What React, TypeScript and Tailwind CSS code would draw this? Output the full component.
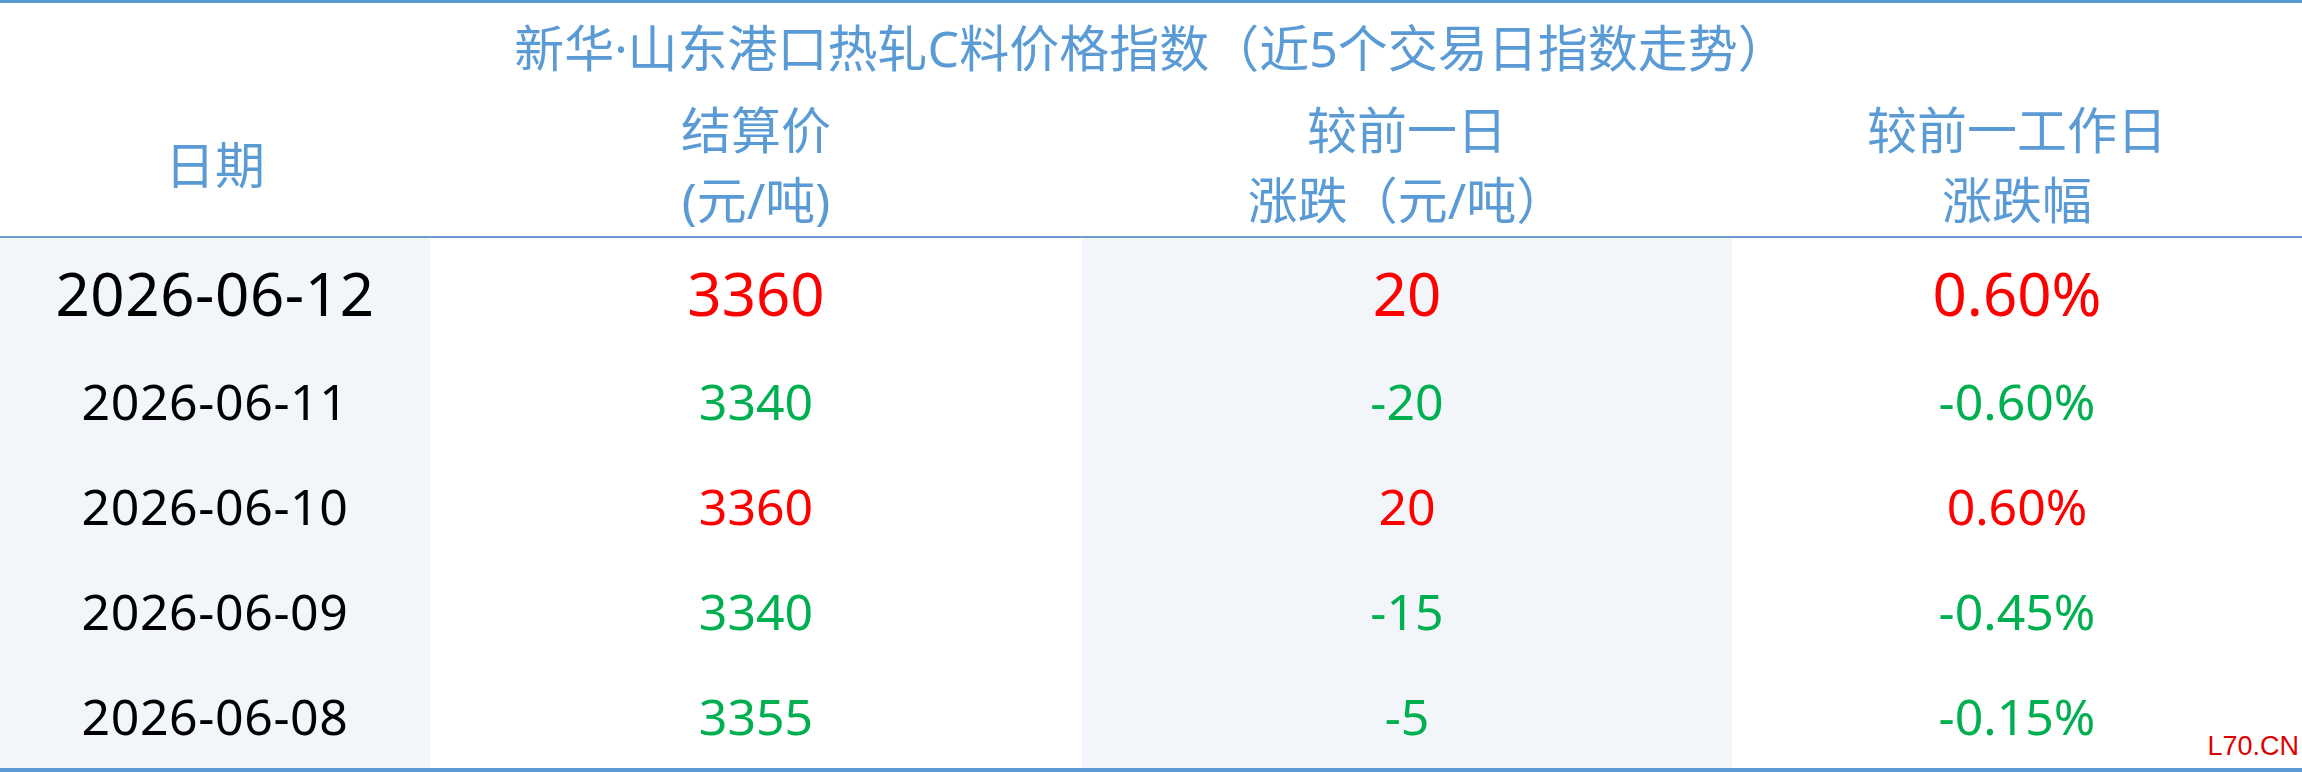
import React from "react";

type Row = {
	date: string;
	price: string;
	diff: string;
	pct: string;
	up: boolean;
};

const rows: Row[] = [
	{ date: "2026-06-12", price: "3360", diff: "20", pct: "0.60%", up: true },
	{ date: "2026-06-11", price: "3340", diff: "-20", pct: "-0.60%", up: false },
	{ date: "2026-06-10", price: "3360", diff: "20", pct: "0.60%", up: true },
	{ date: "2026-06-09", price: "3340", diff: "-15", pct: "-0.45%", up: false },
	{ date: "2026-06-08", price: "3355", diff: "-5", pct: "-0.15%", up: false },
];

export default function App() {
	return (
		<div className="relative h-[772px] w-[2302px] border-t-[3px] border-b-4 border-[#5b9bd5] bg-white font-['Noto_Sans','Noto_Sans_CJK_SC',sans-serif]">
			{/* Title */}
			<div className="flex h-[90px] items-center justify-center text-[50px] leading-none text-[#5b9bd5]">
				新华·山东港口热轧C料价格指数（近5个交易日指数走势）
			</div>

			{/* Column headers */}
			<div className="grid h-[145px] grid-cols-[430px_652px_650px_570px] border-b-2 border-[#6b9bd1] text-[50px] leading-[70px] text-[#5b9bd5]">
				<div className="flex items-center justify-center">日期</div>
				<div className="flex flex-col items-center justify-center">
					<span>结算价</span>
					<span>(元/吨)</span>
				</div>
				<div className="flex flex-col items-center justify-center">
					<span>较前一日</span>
					<span>涨跌（元/吨）</span>
				</div>
				<div className="flex flex-col items-center justify-center">
					<span>较前一工作日</span>
					<span>涨跌幅</span>
				</div>
			</div>

			{/* Data rows */}
			{rows.map((r, i) => {
				const color = r.up ? "text-[#ff0000]" : "text-[#00b050]";
				const first = i === 0;
				return (
					<div
						key={r.date}
						className={
							first
								? "grid h-[110px] grid-cols-[430px_652px_650px_570px] text-[60px] leading-none"
								: "grid h-[105px] grid-cols-[430px_652px_650px_570px] text-[50px] leading-none"
						}
					>
						<div className="flex items-center justify-center bg-[#f2f6fb] tracking-[0.6px] text-black">{r.date}</div>
						<div className={`flex items-center justify-center ${color}`}>{r.price}</div>
						<div className={`flex items-center justify-center bg-[#f2f6fb] ${color}`}>{r.diff}</div>
						<div className={`flex items-center justify-center ${color}`}>{r.pct}</div>
					</div>
				);
			})}

			{/* Watermark */}
			<span className="absolute right-[3px] bottom-[8px] font-['Liberation_Sans',sans-serif] text-[27px] leading-none text-[#dd0000]">
				L70.CN
			</span>
		</div>
	);
}
